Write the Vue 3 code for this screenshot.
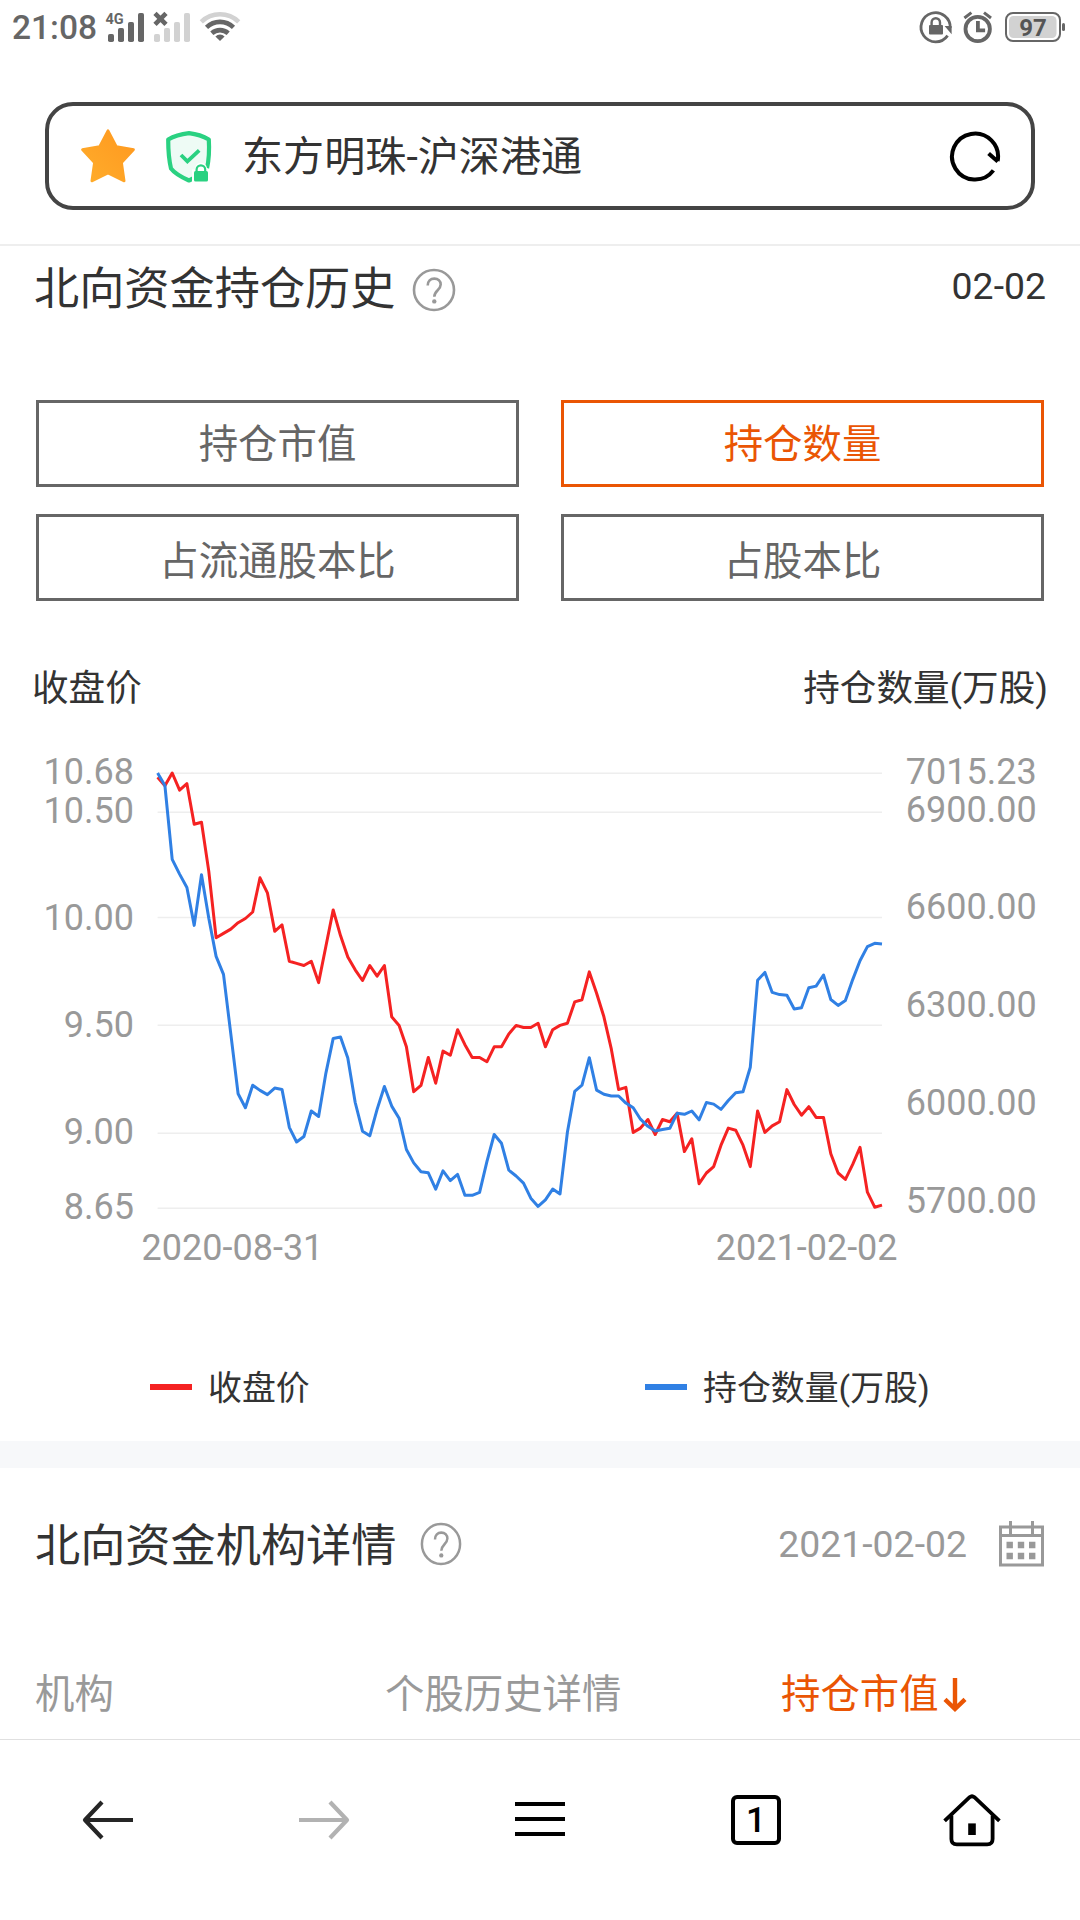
<template>
  <div class="phone">
    <header class="status-bar">
      <span class="clock">21:08</span>
      <svg class="status-left" width="144" height="56" viewBox="100 0 144 56">
        <text class="net" x="105.4" y="23.8">4G</text>
        <g fill="#666">
          <rect x="108" y="34" width="6" height="8" rx="1.8" />
          <rect x="118" y="28" width="6" height="14" rx="1.8" />
          <rect x="128" y="22" width="6" height="20" rx="1.8" />
          <rect x="138" y="13" width="6" height="29" rx="1.8" />
        </g>
        <g fill="#d2d2d2">
          <rect x="154" y="34" width="6" height="8" rx="1.8" />
          <rect x="164" y="28" width="6" height="14" rx="1.8" />
          <rect x="174" y="22" width="6" height="20" rx="1.8" />
          <rect x="184" y="13" width="6" height="29" rx="1.8" />
        </g>
        <path d="M155 13.4 166 24.4M166 13.4 155 24.4" stroke="#666" stroke-width="4.6" fill="none" />
        <!-- wifi -->
        <g fill="none" stroke="#666" stroke-width="4.6">
          <path d="M201.3 21.8a27 27 0 0 1 37.4 0" stroke="#d2d2d2" />
          <path d="M206.5 27.3a19.6 19.6 0 0 1 27 0" />
          <path d="M211.8 33.3a12.2 12.2 0 0 1 16.4 0" />
        </g>
        <path d="M220 41l-4.6-4.6a6.8 6.8 0 0 1 9.2 0z" fill="#666" />
      </svg>
      <svg class="status-right" width="156" height="56" viewBox="914 0 156 56">
        <!-- rotation lock -->
        <path d="M947.6 35.6A14.6 14.6 0 1 1 950.2 28" fill="none" stroke="#666" stroke-width="2.8" />
        <path d="M944.6 26h7v8.2z" fill="#666" />
        <rect x="929" y="25" width="14" height="9.4" rx="1" fill="#666" />
        <path d="M931.6 26v-3.6a4.2 4.2 0 0 1 8.4 0V26" fill="none" stroke="#666" stroke-width="2.4" />
        <!-- alarm -->
        <circle cx="977.7" cy="29" r="12.2" fill="none" stroke="#666" stroke-width="3.8" />
        <path d="M977.9 21v9.4h7.2" fill="none" stroke="#666" stroke-width="3.8" />
        <path d="M964.4 18l7-5.4M991 18l-7-5.4" stroke="#666" stroke-width="3" />
        <!-- battery -->
        <rect x="1006" y="13" width="54" height="28" rx="7" fill="none" stroke="#666" stroke-width="2" />
        <rect x="1009" y="16" width="47.5" height="22" rx="4.5" fill="#d2d2d2" />
        <rect x="1062" y="23" width="3" height="8" rx="1.5" fill="#666" />
        <text class="battery-text" x="1033" y="36" text-anchor="middle">97</text>
      </svg>
    </header>

    <div class="address-wrap">
      <div class="address">
        <svg class="star" width="56" height="56" viewBox="0 0 56 56">
          <defs>
            <linearGradient id="starFill" x1="1" y1="0" x2="0" y2="1">
              <stop offset="0" stop-color="#ff981f" />
              <stop offset="1" stop-color="#ffad2b" />
            </linearGradient>
          </defs>
          <path
            d="M28 2.6 36.4 18.6 53.6 21.6 41.6 34.6 44.2 53 28 45.2 11.8 53 14.4 34.6 2.4 21.6 19.6 18.6Z"
            fill="url(#starFill)" stroke="url(#starFill)" stroke-width="2.6" stroke-linejoin="round"
          />
        </svg>
        <svg class="shield" width="50" height="56" viewBox="0 0 50 56">
          <path
            d="M25 5.2C31.5 6 39.5 8.4 44.8 11.5 45.6 24 44.6 33 43 40.5 39.5 45.5 31.5 49.5 25 52.5 18.5 49.5 11 45.8 7 40.4 5.2 33 4.2 24 4.2 11.5 9.5 8.4 18.5 6 25 5.2Z"
            fill="#eefbf5" stroke="#2ad181" stroke-width="4.2" stroke-linejoin="round"
          />
          <path d="M17 27 23.4 33.4 35.2 22.4" fill="none" stroke="#2ad181" stroke-width="3.8" />
          <path d="M28 41.5h3a6 6 0 0 1 12-1.5l3 1v13H28z" fill="#fff" />
          <rect x="30" y="43" width="14" height="10.6" rx="1.6" fill="#2ad181" />
          <path d="M32.6 44v-2.4a4.3 4.3 0 0 1 8.6 0V44" fill="none" stroke="#2ad181" stroke-width="2.2" />
        </svg>
        <span class="page-title">东方明珠-沪深港通</span>
        <svg class="reload" width="56" height="56" viewBox="0 0 56 56">
          <path d="M46.4 42.4A23 23 0 1 1 50.6 33" fill="none" stroke="#000" stroke-width="4" />
          <path d="M41.6 25.4 50.8 33.6" stroke="#000" stroke-width="4" />
        </svg>
      </div>
    </div>

    <section class="history">
      <div class="section-head">
        <h2>北向资金持仓历史</h2>
        <svg class="help" width="44" height="44" viewBox="0 0 44 44">
          <circle cx="22" cy="22" r="20" />
          <path d="M15.7 17.4c0-4.4 2.8-6.8 6.6-6.8s6.4 2.5 6.4 6c0 5.4-6.4 6-6.4 12.2" />
          <circle class="dot" cx="22.3" cy="33.4" r="2.2" />
        </svg>
        <span class="date">02-02</span>
      </div>

      <div class="tabs">
        <button
          v-for="(tab, i) in tabs"
          :key="tab"
          :class="['tab', { active: activeTab === i }]"
          @click="activeTab = i"
        >
          {{ tab }}
        </button>
      </div>

      <div class="axis-titles">
        <span>收盘价</span>
        <span>持仓数量(万股)</span>
      </div>

      <svg class="chart" width="1080" height="560" viewBox="0 730 1080 560">
        <line
          v-for="y in gridLines" :key="y"
          class="grid" :x1="plot.left" :x2="plot.right" :y1="y" :y2="y"
        />
        <text v-for="l in leftLabels" :key="l.text" x="134" :y="l.y" text-anchor="end">{{ l.text }}</text>
        <text v-for="l in rightLabels" :key="l.text" x="905.8" :y="l.y">{{ l.text }}</text>
        <text x="141.6" y="1260">2020-08-31</text>
        <text x="715.8" y="1260">2021-02-02</text>
        <polyline class="line price" :points="pricePoints" />
        <polyline class="line volume" :points="volumePoints" />
      </svg>

      <div class="legend">
        <div class="legend-item"><i class="red"></i><span>收盘价</span></div>
        <div class="legend-item"><i class="blue"></i><span>持仓数量(万股)</span></div>
      </div>
    </section>

    <section class="detail">
      <div class="section-head">
        <h2>北向资金机构详情</h2>
        <svg class="help" width="42" height="44" viewBox="0 0 44 44" preserveAspectRatio="none">
          <circle cx="22" cy="22" r="20" />
          <path d="M15.7 17.4c0-4.4 2.8-6.8 6.6-6.8s6.4 2.5 6.4 6c0 5.4-6.4 6-6.4 12.2" />
          <circle class="dot" cx="22.3" cy="33.4" r="2.2" />
        </svg>
        <span class="date">2021-02-02</span>
        <svg class="calendar" width="45" height="46" viewBox="0 0 45 46">
          <path d="M1.5 6h42v38h-42zM1.5 14.6h42" fill="none" stroke="#999" stroke-width="3" />
          <path d="M11.5 0v13M33.5 0v13" stroke="#999" stroke-width="3" />
          <path d="M7.5 24h6.4M18.8 24h6.4M30 24h6.4M7.5 35h6.4M18.8 35h6.4M30 35h6.4" stroke="#999" stroke-width="6.4" />
        </svg>
      </div>
      <div class="columns">
        <span>机构</span>
        <span>个股历史详情</span>
        <span class="sorted">
          持仓市值
          <svg width="24" height="36" viewBox="0 0 24 36">
            <path d="M12 1v31M2 22.4l10 9.6 10-9.6" fill="none" stroke="#ea5504" stroke-width="4.4" />
          </svg>
        </span>
      </div>
    </section>

    <nav class="nav-bar">
      <a>
        <svg width="58" height="58" viewBox="0 0 58 58">
          <path d="M54 29H7M23 11 6 29l17 18" fill="none" stroke="#262626" stroke-width="4.2" stroke-linejoin="round" />
        </svg>
      </a>
      <a>
        <svg width="58" height="58" viewBox="0 0 58 58">
          <path d="M4 29h47M35 11l17 18-17 18" fill="none" stroke="#b2b2b2" stroke-width="4.2" stroke-linejoin="round" />
        </svg>
      </a>
      <a>
        <svg width="58" height="58" viewBox="0 0 58 58">
          <path d="M4 13h50M4 28h50M4 43h50" stroke="#000" stroke-width="4" />
        </svg>
      </a>
      <a><span class="tab-count">1</span></a>
      <a>
        <svg width="62" height="58" viewBox="0 0 62 58">
          <path d="M3.6 29.8 28.6 6.2q2.4-2 4.8 0L58.4 29.8" fill="none" stroke="#000" stroke-width="3.8" />
          <path d="M10.4 24.5V48q0 5.4 5.4 5.4h30.4q5.4 0 5.4-5.4V24.5" fill="none" stroke="#000" stroke-width="3.8" />
          <rect x="27.2" y="32.4" width="7.6" height="11.6" fill="#000" />
        </svg>
      </a>
    </nav>
  </div>
</template>

<script setup>
import { ref, computed } from 'vue'

const tabs = ['持仓市值', '持仓数量', '占流通股本比', '占股本比']
const activeTab = ref(1)

const plot = { left: 157.6, right: 882, top: 773, bottom: 1208.2 }
const gridLines = [773.3, 812.3, 917.5, 1025.3, 1133.3, 1208.2]

const leftLabels = [
  { text: '10.68', y: 784.2 },
  { text: '10.50', y: 823 },
  { text: '10.00', y: 930 },
  { text: '9.50', y: 1036.6 },
  { text: '9.00', y: 1143.8 },
  { text: '8.65', y: 1218.6 }
]
const rightLabels = [
  { text: '7015.23', y: 784.2 },
  { text: '6900.00', y: 822 },
  { text: '6600.00', y: 919 },
  { text: '6300.00', y: 1016.8 },
  { text: '6000.00', y: 1114.8 },
  { text: '5700.00', y: 1212.6 }
]

// closing price
const prices = [
  10.66, 10.62, 10.68, 10.60, 10.63, 10.44, 10.45, 10.22, 9.91, 9.93,
  9.95, 9.98, 10.00, 10.03, 10.19, 10.12, 9.94, 9.97, 9.80, 9.79,
  9.78, 9.80, 9.70, 9.87, 10.04, 9.92, 9.82, 9.76, 9.71, 9.78,
  9.73, 9.78, 9.54, 9.50, 9.40, 9.19, 9.22, 9.35, 9.23, 9.38,
  9.36, 9.48, 9.41, 9.35, 9.35, 9.33, 9.40, 9.40, 9.46, 9.50,
  9.49, 9.49, 9.51, 9.40, 9.48, 9.50, 9.51, 9.61, 9.62, 9.75,
  9.65, 9.54, 9.39, 9.20, 9.21, 9.00, 9.02, 9.06, 8.99, 9.06,
  9.05, 9.09, 8.91, 8.97, 8.76, 8.81, 8.84, 8.94, 9.02, 9.01,
  8.94, 8.84, 9.10, 9.00, 9.03, 9.05, 9.20, 9.13, 9.08, 9.12,
  9.07, 9.07, 8.90, 8.81, 8.78, 8.85, 8.93, 8.72, 8.65, 8.66
]

// shares held, in 万股
const volumes = [
  7015, 6977, 6751, 6706, 6665, 6549, 6704, 6571, 6454, 6399,
  6217, 6034, 5991, 6060, 6044, 6031, 6051, 6047, 5931, 5886,
  5903, 5981, 5964, 6097, 6203, 6207, 6143, 6007, 5919, 5905,
  5986, 6056, 5996, 5959, 5863, 5822, 5795, 5792, 5742, 5798,
  5768, 5787, 5723, 5723, 5732, 5826, 5909, 5882, 5800, 5782,
  5760, 5714, 5689, 5709, 5742, 5727, 5916, 6041, 6060, 6144,
  6045, 6032, 6027, 6027, 6005, 5991, 5956, 5934, 5920, 5924,
  5928, 5974, 5971, 5981, 5954, 6007, 6002, 5986, 6013, 6037,
  6040, 6115, 6381, 6405, 6344, 6337, 6335, 6293, 6297, 6358,
  6363, 6397, 6322, 6304, 6319, 6383, 6441, 6484, 6494, 6492
]

function toPoints(values, max, scale) {
  const step = (plot.right - plot.left) / (values.length - 1)
  return values
    .map((v, i) => `${(plot.left + i * step).toFixed(1)},${(plot.top + (max - v) * scale).toFixed(1)}`)
    .join(' ')
}

const pricePoints = computed(() => toPoints(prices, 10.68, 213.9))
const volumePoints = computed(() => toPoints(volumes, 7015.23, 0.3268))
</script>

<style>
body {
  margin: 0;
  background: #fff;
}
</style>

<style scoped>
.phone {
  width: 1080px;
  height: 1920px;
  display: flex;
  flex-direction: column;
  overflow: hidden;
  background: #fff;
  color: #333;
  font-family: Roboto, "Noto Sans CJK SC", sans-serif;
}

/* status bar */
.status-bar {
  display: flex;
  align-items: center;
  height: 56px;
}
.clock {
  width: 88px;
  padding-left: 12px;
  font-size: 33.5px;
  font-weight: 500;
  line-height: 58px;
  color: #666;
}
.status-right {
  margin-left: auto;
  margin-right: 10px;
}
.net {
  font-size: 14.5px;
  font-weight: 700;
  fill: #666;
}
.battery-text {
  font-size: 24px;
  font-weight: 700;
  fill: #555;
}

/* address bar */
.address-wrap {
  height: 142px;
  padding: 46px 45px 0;
  border-bottom: 2px solid #eee;
}
.address {
  display: flex;
  align-items: center;
  box-sizing: border-box;
  height: 108px;
  padding: 0 28px 1px 31px;
  border: 4px solid #444;
  border-radius: 28px;
}
.shield {
  margin-left: 28px;
}
.page-title {
  margin-left: 28px;
  padding-top: 3px;
  font-size: 41.1px;
  line-height: 60px;
}
.reload {
  margin-left: auto;
}

.history {
  height: 1195px;
  border-bottom: 27px solid #f7f8fa;
}
.section-head {
  display: flex;
  align-items: center;
}
h2 {
  margin: 0;
  font-size: 45.2px;
  font-weight: 400;
  line-height: 66px;
}
.history .section-head {
  padding: 11px 34px 0 34px;
  height: 66px;
}
.help {
  margin-left: 16px;
  fill: none;
  stroke: #999;
  stroke-width: 2.6;
}
.help .dot {
  fill: #999;
  stroke: none;
}
.date {
  margin-left: auto;
  font-size: 37.4px;
  line-height: 64px;
}
.history .date {
  padding-bottom: 8px;
  line-height: 58px;
}

.tabs {
  display: grid;
  grid-template-columns: 483px 483px;
  grid-auto-rows: 87px;
  gap: 27px 42px;
  padding: 77px 36px 0;
}
.tab {
  padding: 2px 0 0;
  border: 3px solid #666;
  background: #fff;
  color: #666;
  font-family: inherit;
  font-size: 39.4px;
  line-height: 80px;
}
.tab:nth-child(n + 3) {
  padding-top: 5px;
}
.tab.active {
  border-color: #ea5504;
  color: #ea5504;
}

.axis-titles {
  display: flex;
  justify-content: space-between;
  padding: 58px 32px 0 32px;
  font-size: 36.6px;
  line-height: 60px;
}
.chart {
  display: block;
  margin-top: 11px;
}
.chart text {
  font-size: 36px;
  fill: #999;
}
.grid {
  stroke: #eee;
  stroke-width: 1.6;
}
.line {
  fill: none;
  stroke-width: 3;
  stroke-linejoin: round;
}
.price {
  stroke: #f52222;
}
.volume {
  stroke: #3080e4;
}

.legend {
  display: grid;
  grid-template-columns: 495px 1fr;
  padding: 67px 0 0 150px;
}
.legend-item {
  display: flex;
  align-items: center;
  height: 60px;
  font-size: 33.9px;
}
.legend-item span {
  padding-top: 3px;
  line-height: 60px;
}
.legend-item i {
  width: 42px;
  height: 6px;
  margin-right: 16px;
}
.red {
  background: #f52222;
}
.blue {
  background: #3080e4;
}

/* institutions */
.detail {
  height: 271px;
  border-bottom: 1px solid #e0e0e0;
}
.detail .section-head {
  padding: 43px 36px 0 35px;
}
.detail h2 {
  padding-top: 3px;
  margin-bottom: -3px;
}
.detail .help {
  margin-left: 23px;
}
.detail .date {
  color: #999;
}
.calendar {
  margin-left: 32px;
}
.columns {
  display: grid;
  grid-template-columns: 350px 396px 1fr;
  padding: 88px 0 0 35px;
  font-size: 39.4px;
  line-height: 60px;
  color: #999;
}
.sorted {
  display: flex;
  align-items: center;
  gap: 4px;
  color: #ea5504;
}

/* bottom navigation */
.nav-bar {
  display: grid;
  grid-template-columns: repeat(5, 1fr);
  height: 160px;
}
.nav-bar a {
  display: flex;
  align-items: center;
  justify-content: center;
}
.tab-count {
  box-sizing: border-box;
  width: 50px;
  height: 50px;
  border: 4px solid #000;
  border-radius: 6px;
  font-size: 35px;
  font-weight: 500;
  line-height: 43px;
  text-align: center;
  color: #000;
}
</style>
